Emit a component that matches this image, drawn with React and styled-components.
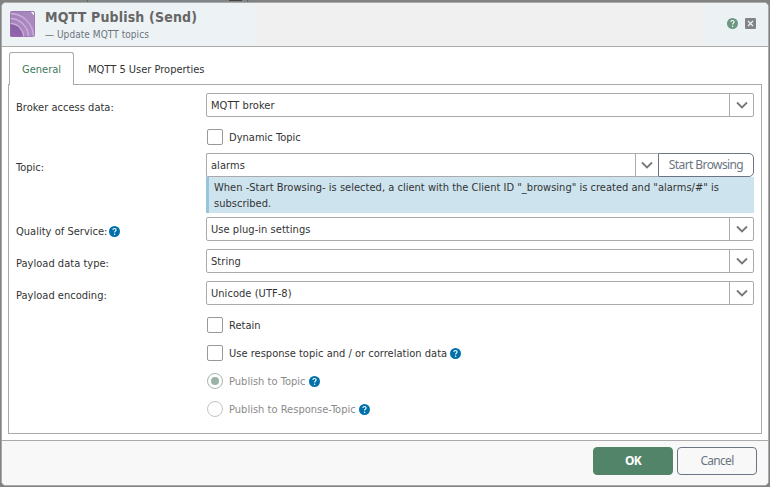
import React, { useState } from 'react';
import styled, { createGlobalStyle } from 'styled-components';

const GlobalStyle = createGlobalStyle`
  * {
    box-sizing: border-box;
  }

  body {
    margin: 0;
    background-color: #828282;
    color: #333333;
    font-family: 'DejaVu Sans Condensed', 'DejaVu Sans', sans-serif;
    font-stretch: condensed;
    font-size: 11px;
    letter-spacing: 0.02px;
  }

  button {
    font: inherit;
    cursor: pointer;
  }
`;

const Backdrop = styled.div`
  height: 487px;
  padding: 2px 1px 1px 1px;
  background:
    linear-gradient(#444444, #444444) 229px 0 / 13px 1px no-repeat,
    linear-gradient(90deg, #4f6f70 1px, #7f8685 1px, #7f8685 160px, #4f6f70 160px) 87px 0 / 161px 2px no-repeat,
    #828282;
`;

const Dialog = styled.div`
  display: flex;
  flex-direction: column;
  height: 484px;
  border: 1px solid #aaaaaa;
  border-radius: 5px;
  background-color: #ffffff;
  overflow: hidden;
`;

const DialogHeader = styled.header`
  display: flex;
  align-items: flex-start;
  height: 44px;
  padding: 8px 12px 0 8px;
  border-bottom: 1px solid #aaaaaa;
  background: linear-gradient(90deg, #edf2f5 253px, #f0f0f0 253px, #f0f0f0 703px, #ecf1f4 703px);
`;

const HeaderText = styled.div`
  flex: 1;
  padding-left: 10px;
`;

const Title = styled.h1`
  margin: -2px 0 0;
  font-size: 14px;
  line-height: 16px;
  font-weight: bold;
  letter-spacing: 0.17px;
  color: #666666;
  white-space: nowrap;
`;

const Subtitle = styled.div`
  margin-top: 4px;
  font-size: 10px;
  line-height: 12px;
  letter-spacing: 0.06px;
  color: #6b757d;
`;

const HeaderActions = styled.div`
  display: flex;
  gap: 7px;
  padding-top: 7px;
`;

const IconButton = styled.button`
  display: flex;
  padding: 0;
  border: none;
  background: none;
`;

const TabBar = styled.div`
  display: flex;
  height: 38px;
  padding: 5px 0 0 7px;
`;

const Tab = styled.button`
  position: relative;
  height: 33px;
  margin-bottom: -1px;
  padding: ${({ $active }) => ($active ? '0 12px' : '0 13px')};
  border: 1px solid ${({ $active }) => ($active ? '#aaaaaa' : 'transparent')};
  border-bottom: none;
  border-radius: 3px 3px 0 0;
  background-color: ${({ $active }) => ($active ? '#ffffff' : 'transparent')};
  color: ${({ $active }) => ($active ? '#3f7a5c' : '#333333')};
  z-index: ${({ $active }) => ($active ? 1 : 0)};
`;

const Panel = styled.main`
  height: 350px;
  margin: -1px 6px 0 6px;
  padding: 8px 7px 0;
  border: 1px solid #aaaaaa;
`;

const FormRow = styled.div`
  display: grid;
  grid-template-columns: 190px 1fr;
  height: ${({ $height }) => $height || 32}px;
`;

const FormLabel = styled.div`
  display: flex;
  gap: 2px;
  height: 28px;
  align-items: center;
`;

const FormField = styled.div`
  min-width: 0;
`;

const FieldLine = styled.div`
  display: flex;
`;

const ComboBox = styled.div`
  display: flex;
  flex: 1;
  height: 24px;
  border: 1px solid #aaaaaa;
  border-radius: ${({ $joined }) => ($joined ? '2px 0 0 2px' : '2px')};
  border-right-width: ${({ $joined }) => ($joined ? 0 : 1)}px;
  background-color: #ffffff;
`;

const ComboValue = styled.div`
  flex: 1;
  padding-left: 4px;
  line-height: 24px;
  letter-spacing: 0.05px;
`;

const ComboTrigger = styled.button`
  display: flex;
  align-items: center;
  justify-content: center;
  width: ${({ $joined }) => ($joined ? 23 : 24)}px;
  padding: 0;
  border: none;
  border-left: 1px solid #aaaaaa;
  background: none;
`;

const BrowseButton = styled.button`
  width: 96px;
  height: 24px;
  padding: 0;
  border: 1px solid #6b7583;
  border-radius: 0 5px 5px 0;
  background-color: #ffffff;
  color: #6b7583;
  font-family: 'Noto Sans', sans-serif;
  font-size: 12px;
  line-height: 22px;
  letter-spacing: -0.6px;
  white-space: nowrap;
`;

const Hint = styled.div`
  height: 36px;
  padding: 3px 0 0 5px;
  border-left: 3px solid #97c5dc;
  background-color: #cde3ee;
  line-height: 16px;
  white-space: nowrap;
`;

const Option = styled.div`
  display: flex;
  align-items: center;
  height: 28px;
  padding: 0 0 4px 191px;
  color: ${({ $disabled }) => ($disabled ? '#8a8a8a' : '#333333')};
`;

const OptionText = styled.span`
  padding: 0 3px 0 6px;
`;

const Check = styled.button`
  width: 16px;
  height: 16px;
  padding: 0;
  border: 1px solid #999999;
  border-radius: 2px;
  background-color: ${({ $checked }) => ($checked ? '#518469' : '#ffffff')};
`;

const Radio = styled.span`
  display: flex;
  align-items: center;
  justify-content: center;
  width: 16px;
  height: 16px;
  border: 1px solid ${({ $selected }) => ($selected ? '#a3b8ad' : '#c4c4c4')};
  border-radius: 50%;

  &::after {
    content: '';
    width: 8px;
    height: 8px;
    border-radius: 50%;
    background-color: ${({ $selected }) => ($selected ? '#9bb3a6' : 'transparent')};
  }
`;

const DialogFooter = styled.footer`
  display: flex;
  flex: 1;
  gap: 4px;
  justify-content: flex-end;
  margin-top: 6px;
  padding: 6px 11px 0 0;
  border-top: 1px solid #aaaaaa;
  background-color: #f8f8f8;
`;

const ActionButton = styled.button`
  width: 80px;
  height: 28px;
  padding: 0;
  border: 1px solid ${({ $primary }) => ($primary ? '#518469' : '#6b7583')};
  border-radius: 4px;
  background-color: ${({ $primary }) => ($primary ? '#518469' : '#f8f8f8')};
  color: ${({ $primary }) => ($primary ? '#ffffff' : '#6b7583')};
  font-family: 'Noto Sans', sans-serif;
  font-size: 12px;
  font-weight: ${({ $primary }) => ($primary ? 'bold' : 'normal')};
  letter-spacing: -0.7px;
  line-height: 24px;
`;

const PluginIcon = () => (
  <svg width="25" height="26" viewBox="0 0 25 26">
    <defs>
      <linearGradient id="tile" x1="0" y1="0" x2="1" y2="1">
        <stop offset="0" stopColor="#a182b8" />
        <stop offset="1" stopColor="#b28bc6" />
      </linearGradient>
      <linearGradient id="core" x1="0" y1="0" x2="0" y2="1">
        <stop offset="0" stopColor="#8760a3" />
        <stop offset="1" stopColor="#a069b6" />
      </linearGradient>
      <clipPath id="tileClip">
        <rect width="25" height="26" rx="2" />
      </clipPath>
    </defs>
    <g clipPath="url(#tileClip)">
      <rect width="25" height="26" fill="url(#tile)" />
      <g fill="none" stroke="#c9b2d8" strokeWidth="1.3">
        <circle cx="0" cy="26" r="13.5" />
        <circle cx="0" cy="26" r="18.5" />
        <circle cx="0" cy="26" r="23.5" />
      </g>
      <circle cx="0" cy="26" r="12.8" fill="url(#core)" />
      <path d="M21 1h3v3.5z" fill="#fff" />
      <rect x=".5" y=".5" width="24" height="25" rx="2" fill="none" stroke="#9470ad" strokeOpacity=".6" />
    </g>
  </svg>
);

const HelpIcon = ({ color = '#0070ab' }) => (
  <svg width="11" height="11" viewBox="0 0 11 11">
    <circle cx="5.5" cy="5.5" r="5.5" fill={color} />
    <path
      d="M3.900 4.100c0-1 .7-1.600 1.600-1.600s1.600.6 1.600 1.500c0 1-1.500 1.200-1.500 2.400"
      fill="none"
      stroke="#fff"
      strokeWidth="1.100"
    />
    <circle cx="5.600" cy="8.200" r=".75" fill="#fff" />
  </svg>
);

const CloseIcon = () => (
  <svg width="11" height="11" viewBox="0 0 11 11">
    <rect width="11" height="11" rx="1.200" fill="#828587" />
    <path d="M3 3l5 5M8 3l-5 5" stroke="#f3f3f3" strokeWidth="1.100" />
  </svg>
);

const ChevronIcon = () => (
  <svg width="12" height="8" viewBox="0 0 12 8">
    <path d="M1 1.500l5 5 5-5" fill="none" stroke="#777" strokeWidth="1.800" />
  </svg>
);

const Select = ({ value, joined }) => (
  <ComboBox $joined={joined}>
    <ComboValue>{value}</ComboValue>
    <ComboTrigger $joined={joined}>
      <ChevronIcon />
    </ComboTrigger>
  </ComboBox>
);

const SelectRow = ({ label, value, help }) => (
  <FormRow>
    <FormLabel>
      {label}
      {help && <HelpIcon />}
    </FormLabel>
    <FormField>
      <Select value={value} />
    </FormField>
  </FormRow>
);

const CheckOption = ({ label, help }) => {
  const [checked, setChecked] = useState(false);

  return (
    <Option>
      <Check
        type="button"
        role="checkbox"
        aria-checked={checked}
        $checked={checked}
        onClick={() => setChecked(!checked)}
      />
      <OptionText>{label}</OptionText>
      {help && <HelpIcon />}
    </Option>
  );
};

const RadioOption = ({ label, selected }) => (
  <Option $disabled>
    <Radio $selected={selected} />
    <OptionText>{label}</OptionText>
    <HelpIcon />
  </Option>
);

const App = () => {
  return (
    <>
      <GlobalStyle />
      <Backdrop>
        <Dialog>
          <DialogHeader>
            <PluginIcon />
            <HeaderText>
              <Title>MQTT Publish (Send)</Title>
              <Subtitle>— Update MQTT topics</Subtitle>
            </HeaderText>
            <HeaderActions>
              <IconButton>
                <HelpIcon color="#6c9781" />
              </IconButton>
              <IconButton>
                <CloseIcon />
              </IconButton>
            </HeaderActions>
          </DialogHeader>

          <TabBar>
            <Tab $active>General</Tab>
            <Tab>MQTT 5 User Properties</Tab>
          </TabBar>

          <Panel>
            <SelectRow label="Broker access data:" value="MQTT broker" />
            <CheckOption label="Dynamic Topic" />
            <FormRow $height={64}>
              <FormLabel>Topic:</FormLabel>
              <FormField>
                <FieldLine>
                  <Select value="alarms" joined />
                  <BrowseButton>Start Browsing</BrowseButton>
                </FieldLine>
                <Hint>
                  When -Start Browsing- is selected, a client with the Client ID "_browsing" is created and "alarms/#" is
                  <br />
                  subscribed.
                </Hint>
              </FormField>
            </FormRow>
            <SelectRow label="Quality of Service:" value="Use plug-in settings" help />
            <SelectRow label="Payload data type:" value="String" />
            <SelectRow label="Payload encoding:" value="Unicode (UTF-8)" />
            <CheckOption label="Retain" />
            <CheckOption label="Use response topic and / or correlation data" help />
            <RadioOption label="Publish to Topic" selected />
            <RadioOption label="Publish to Response-Topic" />
          </Panel>

          <DialogFooter>
            <ActionButton $primary>OK</ActionButton>
            <ActionButton>Cancel</ActionButton>
          </DialogFooter>
        </Dialog>
      </Backdrop>
    </>
  );
};

export default App;
